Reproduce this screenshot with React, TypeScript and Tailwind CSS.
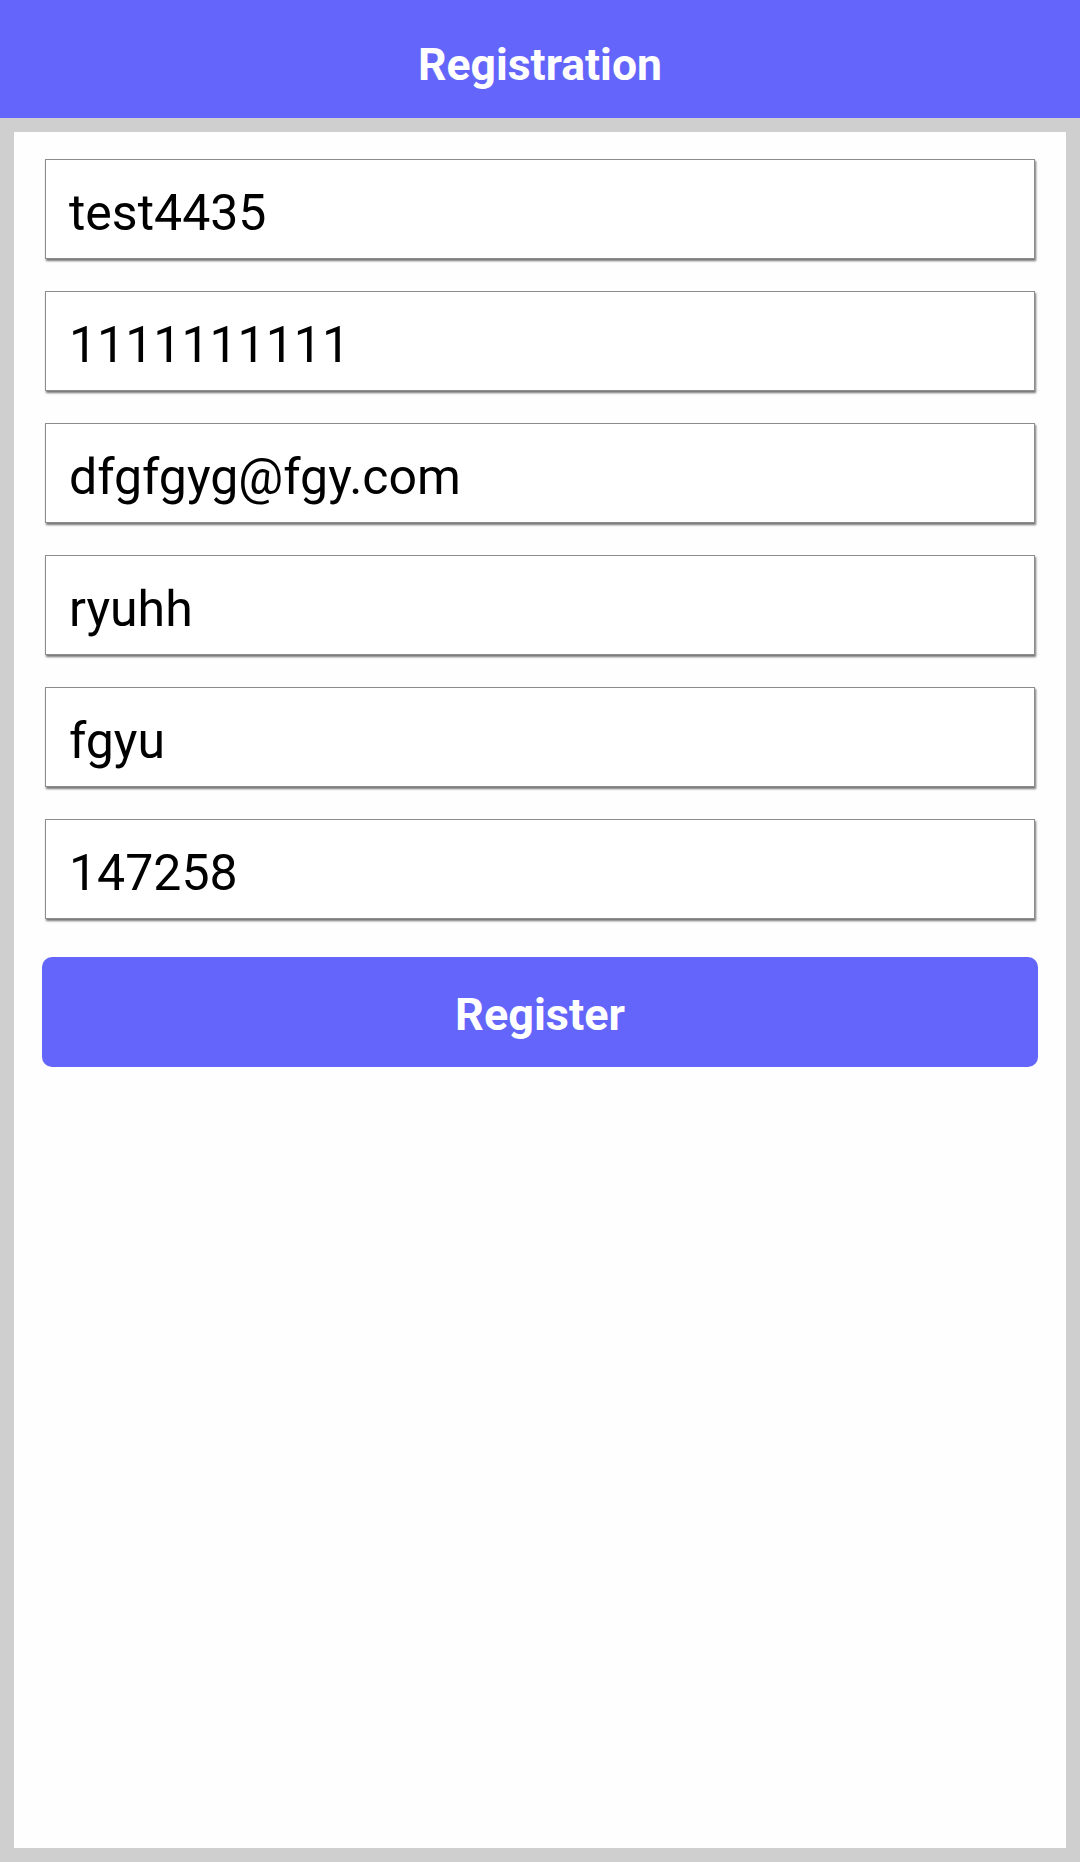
import React from "react";

const values = ["test4435", "1111111111", "dfgfgyg@fgy.com", "ryuhh", "fgyu", "147258"];

export default function App() {
  return (
    <div className="w-[1080px] h-[1862px] flex flex-col bg-[#cfcfcf]" style={{ fontFamily: "Roboto, 'Liberation Sans', sans-serif" }}>
      <header className="h-[118px] shrink-0 bg-[#6466fb] flex items-center justify-center pt-[12px]">
        <h1 className="text-white font-bold text-[44.5px] leading-none">Registration</h1>
      </header>
      <div className="flex-1 p-[14px] flex">
        <main className="flex-1 bg-[#fefefe] px-[28px] pt-[27px] flex flex-col">
          <div className="flex flex-col gap-[32px] px-[3px]">
            {values.map((v) => (
              <div
                key={v}
                className="h-[100px] border border-[#8c8c8c] bg-white shadow-[1px_2px_2px_rgba(0,0,0,0.55)] flex items-center pl-[23px] pt-[7px] text-[50px] leading-none text-black"
              >
                {v}
              </div>
            ))}
          </div>
          <button className="mt-[38px] h-[110px] w-full rounded-[10px] bg-[#6466fb] text-white font-bold text-[45px] leading-none flex items-center justify-center pt-[5px]">
            Register
          </button>
        </main>
      </div>
    </div>
  );
}
